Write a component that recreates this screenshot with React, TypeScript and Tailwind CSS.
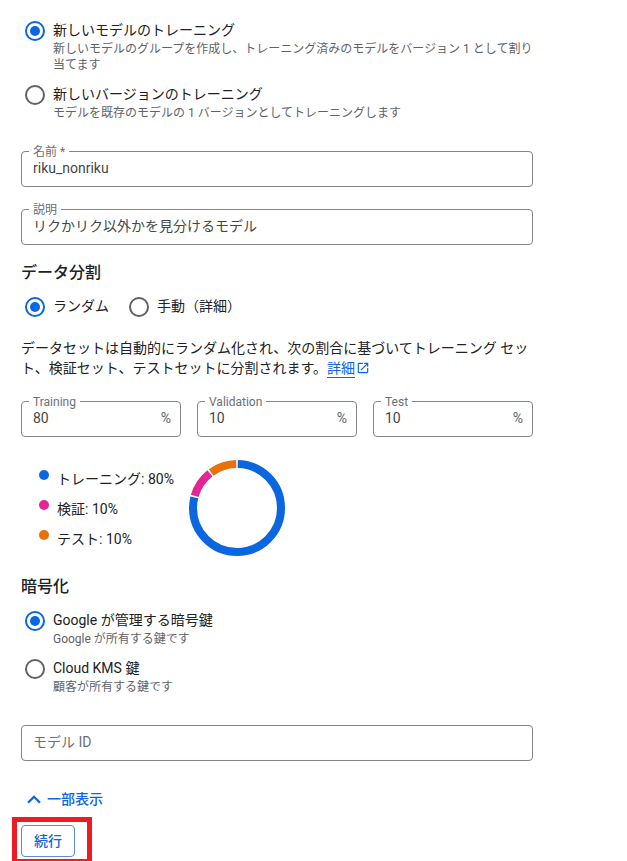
import type { ReactNode } from "react";

type RadioProps = {
  name: string;
  label: string;
  hint?: string;
  checked?: boolean;
};

function Radio({ name, label, hint, checked }: RadioProps) {
  return (
    <label className="flex items-start gap-2 pl-1">
      <input
        type="radio"
        name={name}
        defaultChecked={checked}
        className="mt-px size-5 shrink-0 appearance-none rounded-full border-2 border-[#5f6368] bg-clip-content p-[3px] checked:border-[#0b66e0] checked:bg-[#0b66e0]"
      />
      <span className="block">
        <span className="block text-sm leading-5 text-[#202124]">{label}</span>
        {hint && <span className="mt-px block text-xs leading-4 text-[#5f6368]">{hint}</span>}
      </span>
    </label>
  );
}

type FieldProps = {
  id: string;
  label: string;
  value: string;
  suffix?: string;
};

function Field({ id, label, value, suffix }: FieldProps) {
  return (
    <div className="relative flex h-9 min-w-0 items-center rounded border border-[#80868b] pr-[9px] pb-0.5">
      <label
        htmlFor={id}
        className="absolute -top-2 left-[7px] bg-white px-1 text-xs leading-4 text-[#6b7075]"
      >
        {label}
      </label>
      <input
        id={id}
        type="text"
        defaultValue={value}
        className="h-5 w-full min-w-0 bg-transparent pl-[11px] text-sm leading-5 text-[#444746] outline-none"
      />
      {suffix && <span className="text-sm leading-5 text-[#5f6368]">{suffix}</span>}
    </div>
  );
}

function Heading({ children }: { children: ReactNode }) {
  return <h2 className="text-base leading-6 font-medium text-[#202124]">{children}</h2>;
}

const segments = [
  { label: "トレーニング", percent: 80, dot: "bg-[#0b66e0]", color: "#0b66e0", from: 0, to: 285 },
  { label: "検証", percent: 10, dot: "bg-[#e52592]", color: "#e52592", from: 285, to: 323 },
  { label: "テスト", percent: 10, dot: "bg-[#e8710a]", color: "#e8710a", from: 323, to: 360 },
];

function Donut() {
  return (
    <svg viewBox="0 0 96 96" className="size-24" aria-hidden="true">
      {segments.map((s) => (
        <circle
          key={s.label}
          cx="48"
          cy="48"
          r="44"
          fill="none"
          stroke={s.color}
          strokeWidth="8"
          pathLength={360}
          strokeDasharray={`${s.to - s.from - 2} ${360 - (s.to - s.from - 2)}`}
          strokeDashoffset={-(s.from + 1)}
          transform="rotate(-90 48 48)"
        />
      ))}
    </svg>
  );
}

export default function App() {
  return (
    <main className="bg-white px-[21px] pt-5 pb-1 font-['Roboto','Noto_Sans_CJK_JP',sans-serif]" lang="ja">
      <form className="max-w-lg">
        <div className="flex flex-col gap-[11px]">
          <Radio
            name="method"
            label="新しいモデルのトレーニング"
            hint="新しいモデルのグループを作成し、トレーニング済みのモデルをバージョン 1 として割り当てます"
            checked
          />
          <Radio
            name="method"
            label="新しいバージョンのトレーニング"
            hint="モデルを既存のモデルの 1 バージョンとしてトレーニングします"
          />
        </div>

        <div className="mt-[30px] flex flex-col gap-[22px]">
          <Field id="name" label="名前 *" value="riku_nonriku" />
          <Field id="description" label="説明" value="リクかリク以外かを見分けるモデル" />
        </div>

        <section className="mt-4">
          <Heading>データ分割</Heading>
          <div className="mt-[11px] flex gap-4">
            <Radio name="split" label="ランダム" checked />
            <Radio name="split" label="手動（詳細）" />
          </div>
          <p className="mt-[21px] text-sm leading-5 text-[#202124]">
            データセットは自動的にランダム化され、次の割合に基づいてトレーニング セット、検証セット、テストセットに分割されます。
            <a href="#details" className="text-[#0b66e0]">
              <span className="border-b border-[#0b66e0] pb-px">詳細</span>
              <svg viewBox="0 0 24 24" className="ml-px inline size-[14px] align-[-2px]" fill="currentColor" aria-hidden="true">
                <path d="M19 19H5V5h7V3H5a2 2 0 0 0-2 2v14a2 2 0 0 0 2 2h14c1.1 0 2-.9 2-2v-7h-2v7zM14 3v2h3.59l-9.83 9.83 1.41 1.41L19 6.41V10h2V3h-7z" />
              </svg>
            </a>
          </p>
          <div className="mt-[23px] grid grid-cols-3 gap-4">
            <Field id="training" label="Training" value="80" suffix="%" />
            <Field id="validation" label="Validation" value="10" suffix="%" />
            <Field id="test" label="Test" value="10" suffix="%" />
          </div>
          <div className="mt-[23px] flex gap-[15px] pl-[18px]">
            <ul className="pt-1">
              {segments.map((s) => (
                <li key={s.label} className="flex h-[30px] items-start gap-2">
                  <span className={`mt-1.5 size-[10px] rounded-full ${s.dot}`} />
                  <span className="pt-[5px] text-sm leading-5 text-[#202124]">
                    {s.label}: {s.percent}%
                  </span>
                </li>
              ))}
            </ul>
            <Donut />
          </div>
        </section>

        <section className="mt-[19px]">
          <Heading>暗号化</Heading>
          <div className="mt-[11px] flex flex-col gap-[11px]">
            <Radio name="encryption" label="Google が管理する暗号鍵" hint="Google が所有する鍵です" checked />
            <Radio name="encryption" label="Cloud KMS 鍵" hint="顧客が所有する鍵です" />
          </div>
        </section>

        <input
          type="text"
          aria-label="モデル ID"
          placeholder="モデル ID"
          className="mt-[30px] block h-9 w-full rounded border border-[#80868b] px-[11px] pb-0.5 text-sm leading-5 text-[#444746] outline-none placeholder:text-[#6b7075]"
        />

        <button type="button" className="mt-7 flex items-center gap-1 pl-1 text-sm leading-5 font-medium text-[#0b66e0]">
          <svg viewBox="0 0 24 24" className="size-[18px]" fill="none" stroke="currentColor" strokeWidth="3" aria-hidden="true">
            <path d="M4 17l8-8 8 8" />
          </svg>
          一部表示
        </button>

        <div className="relative mt-4 flex">
          <button
            type="button"
            className="h-8 rounded border border-[#5b8dd6] px-3 text-sm leading-5 font-medium text-[#0b66e0]"
          >
            続行
          </button>
          <div className="pointer-events-none absolute -top-2 -left-[9px] h-11 w-20 border-[5px] border-b-2 border-[#ed1c24]" />
        </div>
      </form>
    </main>
  );
}
